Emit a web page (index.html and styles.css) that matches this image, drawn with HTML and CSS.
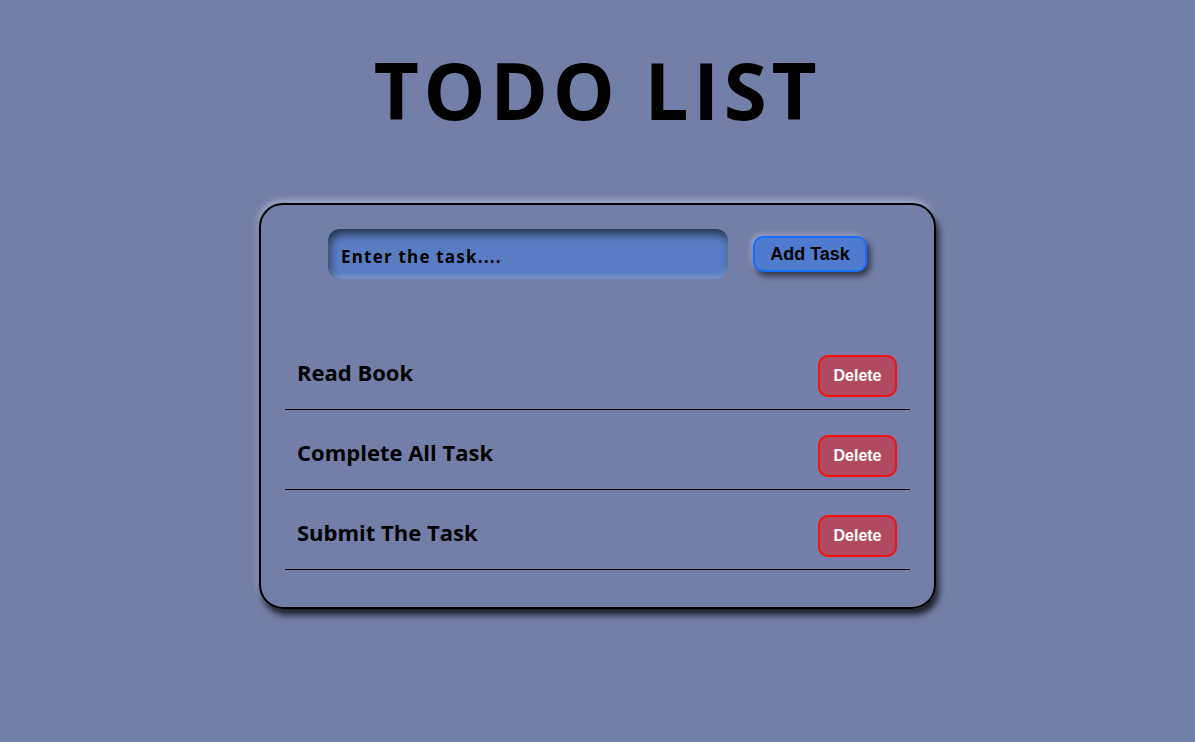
FILE: index.html
```html
<!DOCTYPE html>
<html lang="en">
<head>
<meta charset="utf-8">
<title>TODO LIST</title>
<link rel="stylesheet" href="styles.css">
</head>
<body>
  <h1 class="title">TODO LIST</h1>
  <div class="card">
    <div class="entry">
      <input class="task-input" type="text" placeholder="Enter the task....">
      <button class="add-btn">Add Task</button>
    </div>
    <ul class="tasks">
      <li class="task"><span class="task-text">Read Book</span><button class="del-btn">Delete</button></li>
      <li class="task"><span class="task-text">Complete All Task</span><button class="del-btn">Delete</button></li>
      <li class="task"><span class="task-text">Submit The Task</span><button class="del-btn">Delete</button></li>
    </ul>
  </div>
</body>
</html>
```
FILE: styles.css
```css
* { box-sizing: border-box; }
html, body { margin: 0; padding: 0; }
body {
  background: #737fa8;
  font-family: "Comic Sans MS", "Open Sans", sans-serif;
  height: 742px;
  padding-top: 40px;
}
.title {
  margin: 0;
  text-align: center;
  font-size: 78px;
  line-height: 100px;
  font-weight: 700;
  letter-spacing: 4.7px;
  color: #000;
}
.card {
  width: 677px;
  margin: 63px auto 0;
  border: 2px solid #000;
  border-radius: 24px;
  padding: 24px 24px 37px;
  box-shadow: 3px 6px 6px rgba(0,0,0,0.75), -1px -3px 6px rgba(255,255,255,0.35);
}
.entry {
  display: flex;
  justify-content: center;
  align-items: center;
  gap: 25px;
}
.task-input {
  width: 400px;
  height: 50px;
  border: none;
  border-radius: 12px;
  background: #587dc3;
  padding: 4px 13px 0;
  font-family: "Comic Sans MS", "Open Sans", sans-serif;
  font-weight: 700;
  font-size: 17px;
  letter-spacing: 1.2px;
  color: #000;
  outline: none;
  box-shadow: inset 2px 5px 8px rgba(0,0,0,0.6), inset 0 -3px 5px rgba(255,255,255,0.25);
}
.task-input::placeholder { color: #000; opacity: 1; }
.add-btn {
  width: 114px;
  height: 36px;
  border: 2px solid #1a6dfb;
  border-radius: 10px;
  background: #4f7bcf;
  font-family: "Liberation Sans", Arial, sans-serif;
  font-weight: 700;
  font-size: 18px;
  color: #000;
  padding: 0;
  box-shadow: 3px 4px 6px rgba(0,0,0,0.6), -2px -2px 5px rgba(255,255,255,0.3);
}
.tasks {
  list-style: none;
  margin: 51px 0 0;
  padding: 0;
}
.task {
  display: flex;
  justify-content: space-between;
  align-items: center;
  height: 80px;
  border-bottom: 1px solid #000;
  padding: 13px 13px 0 12px;
}
.task-text {
  font-size: 22px;
  font-weight: 700;
  color: #000;
  margin-top: -8px;
}
.del-btn {
  width: 79px;
  height: 42px;
  border: 2px solid #ff0d0d;
  border-radius: 10px;
  background: #b04a61;
  color: #fff;
  font-family: "Liberation Sans", Arial, sans-serif;
  font-weight: 700;
  font-size: 16px;
  padding: 0;
}
```
